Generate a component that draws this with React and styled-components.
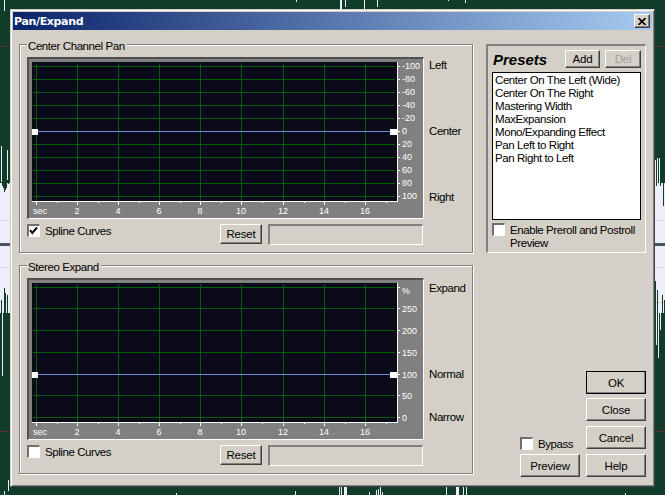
import styled, { createGlobalStyle } from "styled-components";

const GlobalStyle = createGlobalStyle`
  html, body {
    margin: 0;
    padding: 0;
    background: #123c2a;
  }
  body {
    font-family: "Liberation Sans", Arial, sans-serif;
    font-size: 11.5px;
    letter-spacing: -0.42px;
    color: #000;
  }
`;

const Desktop = styled.div`
  position: relative;
  width: 665px;
  height: 495px;
  overflow: hidden;
`;

const Backdrop = styled.svg`
  position: absolute;
  inset: 0;
`;

const Dialog = styled.div`
  position: absolute;
  left: 10px;
  top: 9px;
  width: 645px;
  height: 478px;
  box-sizing: border-box;
  padding: 2px;
  background: #d4d0c8;
  border: 1px solid;
  border-color: #d4d0c8 #404040 #404040 #d4d0c8;
  box-shadow: inset 1px 1px 0 #fff, inset -1px -1px 0 #808080;
`;

const TitleBar = styled.div`
  display: flex;
  align-items: center;
  justify-content: space-between;
  height: 18px;
  padding: 0 2px 0 1px;
  background: linear-gradient(90deg, #0a246a, #a6caf0);
`;

const Title = styled.span`
  color: #fff;
  font-family: "DejaVu Sans", sans-serif;
  font-size: 11px;
  font-weight: 700;
  letter-spacing: -0.35px;
`;

const CloseButton = styled.button`
  display: flex;
  align-items: center;
  justify-content: center;
  width: 16px;
  height: 14px;
  padding: 0;
  background: #d4d0c8;
  border: 1px solid;
  border-color: #fff #404040 #404040 #fff;
  box-shadow: inset -1px -1px 0 #808080;
`;

const Body = styled.div`
  display: flex;
  gap: 13px;
  padding: 14px 6px 0;
`;

const LeftColumn = styled.div`
  display: flex;
  flex-direction: column;
  gap: 12px;
  width: 454px;
`;

const Group = styled.section`
  position: relative;
  box-sizing: border-box;
  height: 209px;
  padding: 12px 7px 0;
  border: 1px solid #808080;
  box-shadow: inset 1px 1px 0 #fff, 1px 1px 0 #fff;
`;

const Legend = styled.span`
  position: absolute;
  left: 7px;
  top: -5px;
  padding: 0 2px 0 1px;
  background: #d4d0c8;
  line-height: 13px;
`;

const ChartRow = styled.div`
  display: flex;
  gap: 5px;
`;

const ChartPanel = styled.div`
  box-sizing: border-box;
  width: 397px;
  height: 162px;
  background: #808080;
  border-style: solid;
  border-width: 2px 1px 1px 2px;
  border-color: #505050 #fff #fff #505050;

  svg {
    display: block;
  }
`;

const Tick = styled.text`
  fill: #fff;
  font-family: "Liberation Sans", Arial, sans-serif;
  font-size: 9px;
  letter-spacing: 0;
`;

const SideLabels = styled.div`
  display: grid;
  grid-template-rows: ${(p) => p.$rows};
  padding-top: ${(p) => p.$top}px;
  line-height: 13px;
`;

const Controls = styled.div`
  display: flex;
  align-items: flex-start;
  margin-top: 5px;
`;

const CheckRow = styled.label`
  display: flex;
  align-items: flex-start;
  gap: 5px;
  width: ${(p) => (p.$width ? `${p.$width}px` : "auto")};
`;

const CheckText = styled.span`
  padding-top: 1px;
  line-height: 13px;
`;

const CheckBox = styled.span`
  flex: none;
  box-sizing: border-box;
  display: block;
  width: 13px;
  height: 13px;
  background: #fff;
  border-style: solid;
  border-width: 2px 1px 1px 2px;
  border-color: #707070 #fff #fff #707070;

  svg {
    display: block;
  }
`;

const Button = styled.button`
  box-sizing: border-box;
  width: ${(p) => p.$width || 60}px;
  height: ${(p) => p.$height || 23}px;
  padding: 0;
  background: #d4d0c8;
  font-family: "Liberation Sans", Arial, sans-serif;
  font-size: 11.5px;
  letter-spacing: -0.2px;
  color: ${(p) => (p.disabled ? "#a0a0a0" : "#000")};
  border: 1px solid;
  border-color: #fff #404040 #404040 #fff;
  box-shadow: inset -1px -1px 0 #808080;
  outline: ${(p) => (p.$primary ? "1px solid #000" : "none")};
  outline-offset: -1px;
`;

const Readout = styled.div`
  box-sizing: border-box;
  width: 155px;
  height: 21px;
  margin-left: 6px;
  border-style: solid;
  border-width: 2px 1px 1px 2px;
  border-color: #808080 #fff #fff #808080;
`;

const RightColumn = styled.div`
  display: flex;
  flex-direction: column;
  width: 160px;
  height: 433px;
`;

const PresetsBox = styled.section`
  box-sizing: border-box;
  height: 209px;
  padding: 4px 4px 0;
  border-style: solid;
  border-width: 2px 1px 1px 2px;
  border-color: #808080 #fff #fff #808080;
`;

const PresetsHead = styled.div`
  display: flex;
  align-items: center;
  gap: 5px;
`;

const PresetsTitle = styled.h2`
  flex: 1;
  margin: 0 0 0 1px;
  font-size: 15px;
  font-style: italic;
  font-weight: 700;
  letter-spacing: 0;
`;

const PresetList = styled.ul`
  box-sizing: border-box;
  height: 148px;
  margin: 4px 0 3px;
  padding: 1px 2px;
  list-style: none;
  background: #fff;
  border: 1px solid #000;
`;

const PresetItem = styled.li`
  line-height: 13px;
  white-space: nowrap;
`;

const Footer = styled.div`
  display: flex;
  gap: 6px;
  justify-content: flex-end;
  margin-top: auto;
`;

const FooterColumn = styled.div`
  display: flex;
  flex-direction: column;
  justify-content: flex-end;
`;

const Stack = styled.div`
  display: flex;
  flex-direction: column;
  gap: 5px;
`;

const OkSlot = styled.div`
  margin-bottom: -1px;
`;

const BypassSlot = styled.div`
  margin-bottom: 3px;
`;

const whiteTicks = [
  [4, 0, 11], [296, 0, 2], [340, 0, 9], [341, 0, 9], [345, 0, 7], [364, 0, 9], [377, 0, 7], [448, 0, 1], [465, 0, 3],
  [4, 491, 495], [8, 480, 491], [176, 493, 495], [295, 491, 495], [339, 487, 495], [341, 487, 495], [344, 487, 495],
  [345, 487, 495], [346, 487, 495], [369, 492, 495], [376, 490, 495], [378, 489, 495], [380, 487, 495], [382, 492, 495],
  [446, 487, 495], [456, 487, 495], [457, 487, 495], [458, 487, 495], [463, 487, 495], [466, 487, 495], [625, 493, 495],
  [1, 146, 182], [7, 150, 180], [2, 293, 376], [8, 300, 313], [655, 160, 187], [657, 158, 188], [659, 158, 185],
  [656, 313, 345], [658, 313, 358], [660, 313, 330],
];

const greenSpikes = [
  [2, 183, 186], [3, 183, 188], [4, 183, 192], [5, 183, 190], [6, 183, 188], [8, 183, 184], [656, 183, 186], [657, 183, 187],
  [660, 183, 186], [663, 183, 206], [1, 300, 313], [4, 288, 313], [5, 293, 313], [7, 295, 313],
  [655, 281, 313], [657, 290, 313], [662, 295, 313], [664, 300, 320],
];

const Waveform = () => (
  <Backdrop width="665" height="495" shapeRendering="crispEdges">
    <rect width="665" height="495" fill="#123c2a" />
    <rect y="183" width="665" height="130" fill="#eeeef8" />
    <rect y="220" width="665" height="1" fill="#d8d8e0" />
    <rect y="267" width="665" height="1" fill="#d8d8e0" />
    <rect y="302" width="665" height="1" fill="#c8ccc8" />
    <rect y="243" width="665" height="3" fill="#4a5668" />
    <rect y="46" width="665" height="1" fill="#5a3030" />
    <rect y="431" width="665" height="1" fill="#5a3030" />
    {greenSpikes.map(([x, y1, y2]) => (
      <rect key={`g${x}${y1}`} x={x} y={y1} width="1" height={y2 - y1} fill="#123c2a" />
    ))}
    {whiteTicks.map(([x, y1, y2]) => (
      <rect key={`w${x}${y1}`} x={x} y={y1} width="1" height={y2 - y1} fill="#eeeef8" />
    ))}
  </Backdrop>
);

const gridX = [7, 48, 89, 130, 171, 212, 254, 295, 336];
const minorX = [28, 69, 110, 151, 192, 233, 275, 316, 357];
const secLabels = [2, 4, 6, 8, 10, 12, 14, 16];
const GREEN = "#006000";

// rows: { y, label, labelY } in coordinates of the grey panel
const Chart = ({ rows, center }) => (
  <svg width="394" height="159" shapeRendering="crispEdges">
    <rect x="3" y="3" width="365" height="139" fill="#0a0a1a" />
    {gridX.map((x) => (
      <rect key={x} x={x} y="4" width="1" height="138" fill={GREEN} />
    ))}
    {rows.map((r) => (
      <rect key={r.y} x="4" y={r.y} width="362" height="1" fill={GREEN} />
    ))}
    <rect x="3" y={center} width="362" height="1" fill="#6a8cd8" />

    <rect x="3" y="142" width="366" height="1" fill="#fff" />
    <rect x="368" y="3" width="1" height="140" fill="#fff" />
    {gridX.map((x) => (
      <rect key={x} x={x} y="143" width="1" height="3" fill="#fff" />
    ))}
    {minorX.map((x) => (
      <rect key={x} x={x} y="143" width="1" height="1" fill="#fff" />
    ))}
    {rows.map((r) => (
      <rect key={r.y} x="369" y={r.y} width="2" height="1" fill="#fff" />
    ))}

    <rect x="3" y={center - 2} width="6" height="6" fill="#fff" />
    <rect x="361" y={center - 2} width="7" height="6" fill="#fff" />

    <g shapeRendering="auto">
      <Tick x="4" y="155">sec</Tick>
      {secLabels.map((s, i) => (
        <Tick key={s} x={gridX[i + 1]} y="155" textAnchor="middle">{s}</Tick>
      ))}
      {rows.map((r) => (
        <Tick key={r.y} x="373" y={(r.labelY || r.y) + 3}>{r.label}</Tick>
      ))}
    </g>
  </svg>
);

const panRows = ["-100", "-80", "-60", "-40", "-20", "0", "20", "40", "60", "80", "100"].map((label, i) => ({
  label,
  y: 7 + i * 13,
}));

const expandRows = [
  { y: 7, label: "%", labelY: 11 },
  { y: 28, label: "250", labelY: 29 },
  { y: 50, label: "200", labelY: 51 },
  { y: 72, label: "150", labelY: 73 },
  { y: 94, label: "100", labelY: 95 },
  { y: 115, label: "50", labelY: 116 },
  { y: 137, label: "0", labelY: 138 },
];

const Check = () => (
  <svg width="10" height="10" viewBox="0 0 10 10">
    <path d="M1 4 L3.3 7 L8 1.5" fill="none" stroke="#000" strokeWidth="2" />
  </svg>
);

const ChannelGroup = ({ title, rows, center, labels, labelRows, labelTop, checked }) => (
  <Group>
    <Legend>{title}</Legend>
    <ChartRow>
      <ChartPanel>
        <Chart rows={rows} center={center} />
      </ChartPanel>
      <SideLabels $rows={labelRows} $top={labelTop}>
        {labels.map((l) => (
          <span key={l}>{l}</span>
        ))}
      </SideLabels>
    </ChartRow>
    <Controls>
      <CheckRow $width={193}>
        <CheckBox>{checked && <Check />}</CheckBox>
        <CheckText>Spline Curves</CheckText>
      </CheckRow>
      <Button $width={42} $height={20}>Reset</Button>
      <Readout />
    </Controls>
  </Group>
);

const presets = [
  "Center On The Left (Wide)",
  "Center On The Right",
  "Mastering Width",
  "MaxExpansion",
  "Mono/Expanding Effect",
  "Pan Left to Right",
  "Pan Right to Left",
];

const App = () => (
  <Desktop>
    <GlobalStyle />
    <Waveform />
    <Dialog>
      <TitleBar>
        <Title>Pan/Expand</Title>
        <CloseButton aria-label="Close">
          <svg width="8" height="7" viewBox="0 0 8 7">
            <path d="M0.5 0 L7.5 7 M7.5 0 L0.5 7" stroke="#000" strokeWidth="1.6" />
          </svg>
        </CloseButton>
      </TitleBar>
      <Body>
        <LeftColumn>
          <ChannelGroup
            title="Center Channel Pan"
            rows={panRows}
            center={72}
            labels={["Left", "Center", "Right"]}
            labelRows="66px 66px 13px"
            labelTop={2}
            checked
          />
          <ChannelGroup
            title="Stereo Expand"
            rows={expandRows}
            center={94}
            labels={["Expand", "Normal", "Narrow"]}
            labelRows="86px 43px 13px"
            labelTop={4}
          />
        </LeftColumn>
        <RightColumn>
          <PresetsBox>
            <PresetsHead>
              <PresetsTitle>Presets</PresetsTitle>
              <Button $width={35} $height={18}>Add</Button>
              <Button $width={36} $height={18} disabled>Del</Button>
            </PresetsHead>
            <PresetList>
              {presets.map((p) => (
                <PresetItem key={p}>{p}</PresetItem>
              ))}
            </PresetList>
            <CheckRow>
              <CheckBox />
              <CheckText>Enable Preroll and Postroll Preview</CheckText>
            </CheckRow>
          </PresetsBox>
          <Footer>
            <FooterColumn>
              <BypassSlot>
                <CheckRow>
                  <CheckBox />
                  <CheckText>Bypass</CheckText>
                </CheckRow>
              </BypassSlot>
              <Button>Preview</Button>
            </FooterColumn>
            <Stack>
              <OkSlot>
                <Button $primary>OK</Button>
              </OkSlot>
              <Button>Close</Button>
              <Button>Cancel</Button>
              <Button>Help</Button>
            </Stack>
          </Footer>
        </RightColumn>
      </Body>
    </Dialog>
  </Desktop>
);

export default App;
